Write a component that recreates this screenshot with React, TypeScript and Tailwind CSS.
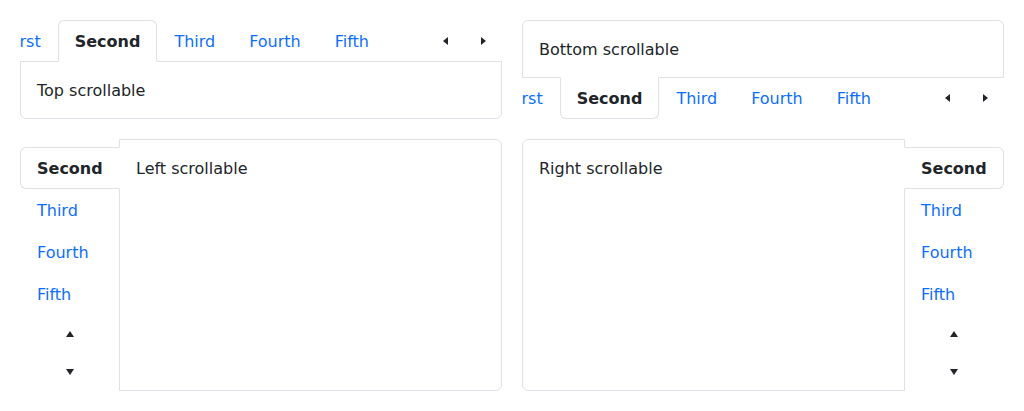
const tabs = ['First', 'Second', 'Third', 'Fourth', 'Fifth'];
const border = 'border-[#dee2e6]';

function Arrow({ dir }: { dir: 'left' | 'right' | 'up' | 'down' }) {
  const horizontal = dir === 'left' || dir === 'right';
  const points = {
    left: '5,0 5,8 0,4',
    right: '0,0 0,8 5,4',
    up: '0,6 8,6 4,0',
    down: '0,0 8,0 4,6',
  }[dir];
  return (
    <svg width={horizontal ? 5 : 8} height={horizontal ? 8 : 6} viewBox={horizontal ? '0 0 5 8' : '0 0 8 6'}>
      <polygon points={points} fill="#212529" />
    </svg>
  );
}

function NavButton({ dir, vertical }: { dir: 'left' | 'right' | 'up' | 'down'; vertical?: boolean }) {
  return (
    <button className={`flex shrink-0 items-center justify-center ${vertical ? 'h-[38px] w-full' : 'w-[38px] h-full'}`}>
      <Arrow dir={dir} />
    </button>
  );
}

function HTabs({ position }: { position: 'top' | 'bottom' }) {
  const top = position === 'top';
  const list = (
    <div className={`relative z-10 flex h-[42px] ${top ? '' : '-mt-px'}`}>
      <div className="flex-1 overflow-hidden">
        <div className="ml-[-30px] flex">
          {tabs.map((t) => {
            const active = t === 'Second';
            return (
              <div
                key={t}
                className={`shrink-0 border px-4 pt-[9px] pb-[7px] leading-6 ${top ? 'rounded-t-md' : 'rounded-b-md'} ${
                  active
                    ? `${border} bg-white font-bold text-[#212529] ${top ? 'border-b-white' : 'border-t-white'}`
                    : 'border-transparent text-[#0d6efd]'
                }`}
              >
                {t}
              </div>
            );
          })}
        </div>
      </div>
      <NavButton dir="left" />
      <NavButton dir="right" />
    </div>
  );
  const panel = (
    <div
      className={`border ${border} px-4 pt-[17px] pb-[15px] leading-6 text-[#212529] ${top ? '-mt-px rounded-b-md' : 'rounded-t-md'}`}
    >
      {top ? 'Top scrollable' : 'Bottom scrollable'}
    </div>
  );
  return <div className="flex flex-col">{top ? <>{list}{panel}</> : <>{panel}{list}</>}</div>;
}

function VTabs({ position }: { position: 'left' | 'right' }) {
  const left = position === 'left';
  const list = (
    <div className={`relative z-10 flex w-[100px] shrink-0 flex-col ${left ? '' : '-ml-px'}`}>
      <div className="flex-1 overflow-hidden">
        <div className="mt-[-34px] flex flex-col">
          {tabs.map((t) => {
            const active = t === 'Second';
            return (
              <div
                key={t}
                className={`border px-4 pt-[9px] pb-[7px] leading-6 ${left ? 'rounded-l-md' : 'rounded-r-md'} ${
                  active
                    ? `${border} bg-white font-bold text-[#212529] ${left ? 'border-r-white' : 'border-l-white'}`
                    : 'border-transparent text-[#0d6efd]'
                }`}
              >
                {t}
              </div>
            );
          })}
        </div>
      </div>
      <NavButton dir="up" vertical />
      <NavButton dir="down" vertical />
    </div>
  );
  const panel = (
    <div
      className={`flex-1 border ${border} px-4 pt-[17px] pb-[15px] leading-6 text-[#212529] ${left ? '-ml-px rounded-r-md' : 'rounded-l-md'}`}
    >
      {left ? 'Left scrollable' : 'Right scrollable'}
    </div>
  );
  return <div className="flex h-[252px]">{left ? <>{list}{panel}</> : <>{panel}{list}</>}</div>;
}

export default function App() {
  return (
    <div className="min-h-screen bg-white p-5 font-['DejaVu_Sans',sans-serif] text-base text-[#212529]">
      <div className="grid grid-cols-2 gap-5">
        <HTabs position="top" />
        <HTabs position="bottom" />
        <VTabs position="left" />
        <VTabs position="right" />
      </div>
    </div>
  );
}
